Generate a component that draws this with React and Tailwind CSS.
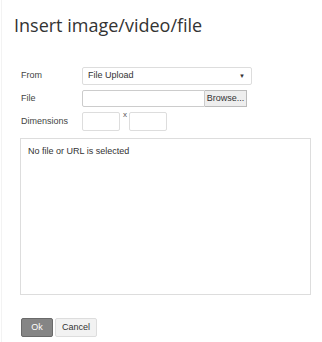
import { useState } from 'react';

const Label = ({ children }) => (
  <div className="w-[61px] shrink-0 text-[9px] text-[#444]">{children}</div>
);

export default function App() {
  const [from] = useState('File Upload');

  return (
    <div className="h-[342px] w-[322px] bg-white pl-[1px] font-['Liberation_Sans',Arial,sans-serif]">
      <div className="h-full border-l border-[#f3f3f3] pl-[12px] pt-[11px]">
        {/* Title */}
        <h1 className="font-['Open_Sans',sans-serif] text-[18px] leading-[28px] text-[#333]">
          Insert image/video/file
        </h1>

        <div className="mt-[28px] pl-[7px]">
          {/* From */}
          <div className="flex h-[18px] items-center">
            <Label>From</Label>
            <div className="flex h-[18px] w-[170px] items-center justify-between rounded-[2px] border border-[#ddd] pr-[6px] pl-[5px] text-[9px] text-[#333]">
              <span>{from}</span>
              <span className="text-[6px]">▼</span>
            </div>
          </div>

          {/* File */}
          <div className="mt-[5px] flex h-[17px] items-center">
            <Label>File</Label>
            <div className="flex h-[17px]">
              <div className="w-[123px] rounded-l-[2px] border border-[#ccc] bg-white" />
              <div className="flex w-[42px] items-center justify-center border border-l-0 border-[#bbb] bg-[#eee] text-[9px] text-[#333]">
                Browse...
              </div>
            </div>
          </div>

          {/* Dimensions */}
          <div className="mt-[5px] flex h-[19px] items-center">
            <Label>Dimensions</Label>
            <div className="flex items-start">
              <div className="h-[19px] w-[38px] rounded-[2px] border border-[#ddd]" />
              <span className="ml-[3px] mr-[2px] -mt-[3px] text-[8px] text-[#555]">x</span>
              <div className="h-[19px] w-[38px] rounded-[2px] border border-[#ddd]" />
            </div>
          </div>

          {/* Preview */}
          <div className="mt-[7px] h-[157px] w-[291px] -ml-[1px] border border-[#ddd] px-[7px] pt-[6px] text-[9px] text-[#333]">
            No file or URL is selected
          </div>

          {/* Buttons */}
          <div className="mt-[23px] flex gap-[2px]">
            <button className="h-[19px] w-[32px] rounded-[2px] border border-[#6a6a6a] bg-[#858585] text-[9px] text-white">
              Ok
            </button>
            <button className="h-[19px] w-[42px] rounded-[2px] border border-[#ddd] bg-[#f2f2f2] text-[9px] text-[#333]">
              Cancel
            </button>
          </div>
        </div>
      </div>
    </div>
  );
}
